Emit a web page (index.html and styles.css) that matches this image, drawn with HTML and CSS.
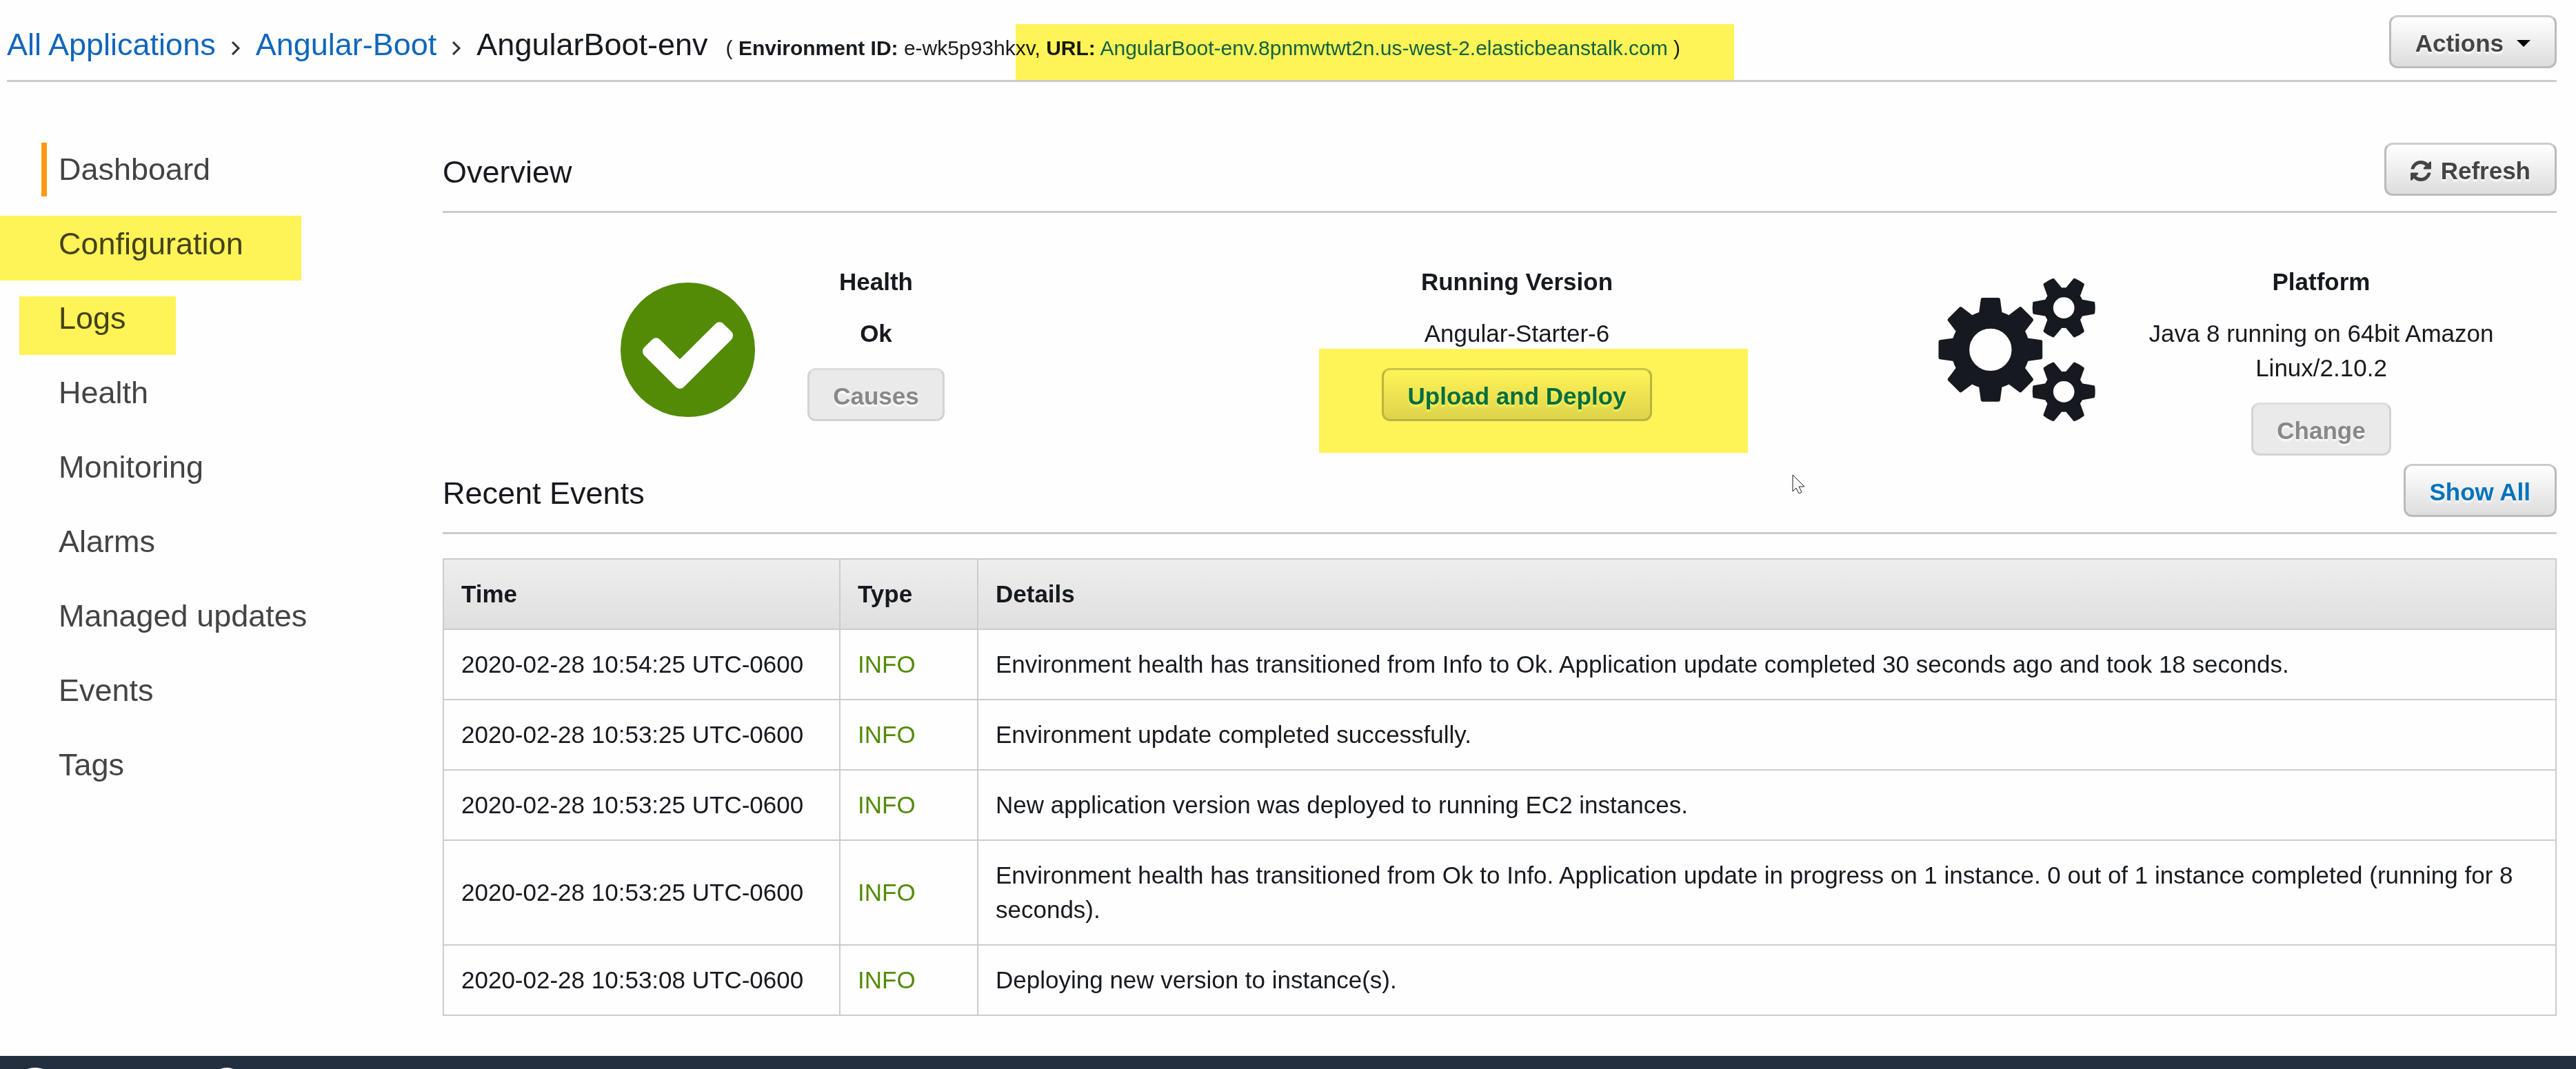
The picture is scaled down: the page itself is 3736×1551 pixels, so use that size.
FILE: index.html
```html
<!DOCTYPE html>
<html lang="en">
<head>
<meta charset="utf-8">
<title>AngularBoot-env - Dashboard</title>
<link rel="stylesheet" href="styles.css">
</head>
<body>
<div class="page">
  <header class="topbar">
    <nav class="crumbs" aria-label="Breadcrumb">
      <a class="link" href="#">All Applications</a>
      <svg class="chevron" viewBox="0 0 14 20" aria-hidden="true"><path d="M2 1l9 9-9 9"/></svg>
      <a class="link" href="#">Angular-Boot</a>
      <svg class="chevron" viewBox="0 0 14 20" aria-hidden="true"><path d="M2 1l9 9-9 9"/></svg>
      <span>AngularBoot-env</span>
      <span class="meta">( <b>Environment ID:</b> e-wk5p93hkxv, <b>URL:</b> <a class="link" href="#">AngularBoot-env.8pnmwtwt2n.us-west-2.elasticbeanstalk.com</a> )</span>
    </nav>
    <button class="btn btn-menu" type="button">Actions
      <svg class="caret" viewBox="0 0 20 10" aria-hidden="true"><path d="M0 0h20L10 10z"/></svg>
    </button>
    <span class="marker marker-url"></span>
  </header>

  <div class="layout">
    <nav class="sidebar" aria-label="Environment">
      <ul class="menu">
        <li class="menu-item"><a class="menu-link is-active" href="#">Dashboard</a></li>
        <li class="menu-item"><a class="menu-link" href="#">Configuration</a><span class="marker marker-config"></span></li>
        <li class="menu-item"><a class="menu-link" href="#">Logs</a><span class="marker marker-logs"></span></li>
        <li class="menu-item"><a class="menu-link" href="#">Health</a></li>
        <li class="menu-item"><a class="menu-link" href="#">Monitoring</a></li>
        <li class="menu-item"><a class="menu-link" href="#">Alarms</a></li>
        <li class="menu-item"><a class="menu-link" href="#">Managed updates</a></li>
        <li class="menu-item"><a class="menu-link" href="#">Events</a></li>
        <li class="menu-item"><a class="menu-link" href="#">Tags</a></li>
      </ul>
    </nav>

    <main class="content">
      <section>
        <div class="section-head">
          <h2 class="section-title">Overview</h2>
          <button class="btn btn-refresh" type="button">
            <svg class="refresh-icon" viewBox="128 128 1536 1536" aria-hidden="true"><path d="M1639 1056q0 5-1 7-64 268-268 434.500t-478 166.500q-146 0-282.500-55t-243.500-157l-129 129q-19 19-45 19t-45-19-19-45v-448q0-26 19-45t45-19h448q26 0 45 19t19 45-19 45l-137 137q71 66 161 102t187 36q134 0 250-65t186-179q11-17 53-117 8-23 30-23h192q13 0 22.500 9.500t9.500 22.500zm25-800v448q0 26-19 45t-45 19h-448q-26 0-45-19t-19-45 19-45l138-138q-148-137-349-137-134 0-250 65t-186 179q-11 17-53 117-8 23-30 23h-199q-13 0-22.500-9.500t-9.500-22.500v-7q65-268 270-434.500t480-166.500q146 0 284 55.500t245 156.500l130-129q19-19 45-19t45 19 19 45z"/></svg>
            Refresh
          </button>
        </div>
        <div class="overview">
          <div class="panel panel-health">
            <svg class="health-icon" viewBox="128 128 1536 1536" aria-hidden="true"><path d="M1412 734q0-28-18-46l-91-90q-19-19-45-19t-45 19l-408 407-226-226q-19-19-45-19t-45 19l-91 90q-18 18-18 46 0 27 18 45l362 362q19 19 45 19 27 0 46-19l543-543q18-18 18-45zm252 162q0 209-103 385.500t-279.500 279.500-385.500 103-385.500-103-279.500-279.500-103-385.500 103-385.500 279.500-279.500 385.500-103 385.500 103 279.500 279.500 103 385.500z"/></svg>
            <div class="facts">
              <h3 class="fact-title">Health</h3>
              <b>Ok</b>
              <button class="btn" type="button" disabled>Causes</button>
            </div>
          </div>
          <div class="panel">
            <div class="facts">
              <h3 class="fact-title">Running Version</h3>
              <span>Angular-Starter-6</span>
              <div class="deploy">
                <button class="btn btn-link" type="button">Upload and Deploy</button>
                <span class="marker marker-deploy"></span>
              </div>
            </div>
          </div>
          <div class="panel panel-platform">
            <svg class="gears-icon" viewBox="153 99 683 627" aria-hidden="true">
              <defs>
                <path id="big-tooth" d="M-51-155L-42-220Q-41-226-34-226H34Q41-226 42-220L51-155z"/>
                <path id="small-tooth" d="M-37-74L-27-131Q-26-134-22-135Q0-138 22-135Q26-134 27-131L37-74z"/>
                <g id="small-gear">
                  <circle class="ring" r="67" stroke-width="42"/>
                  <use href="#small-tooth" transform="rotate(30)"/>
                  <use href="#small-tooth" transform="rotate(90)"/>
                  <use href="#small-tooth" transform="rotate(150)"/>
                  <use href="#small-tooth" transform="rotate(210)"/>
                  <use href="#small-tooth" transform="rotate(270)"/>
                  <use href="#small-tooth" transform="rotate(330)"/>
                </g>
              </defs>
              <g transform="translate(380 412)">
                <circle class="ring" r="131" stroke-width="78"/>
                <use href="#big-tooth"/>
                <use href="#big-tooth" transform="rotate(45)"/>
                <use href="#big-tooth" transform="rotate(90)"/>
                <use href="#big-tooth" transform="rotate(135)"/>
                <use href="#big-tooth" transform="rotate(180)"/>
                <use href="#big-tooth" transform="rotate(225)"/>
                <use href="#big-tooth" transform="rotate(270)"/>
                <use href="#big-tooth" transform="rotate(315)"/>
              </g>
              <use href="#small-gear" transform="translate(699 230)"/>
              <use href="#small-gear" transform="translate(699 595)"/>
            </svg>
            <div class="facts facts-wide">
              <h3 class="fact-title">Platform</h3>
              <span>Java 8 running on 64bit Amazon Linux/2.10.2</span>
              <button class="btn" type="button" disabled>Change</button>
            </div>
          </div>
        </div>
      </section>

      <section>
        <div class="section-head">
          <h2 class="section-title">Recent Events</h2>
          <button class="btn btn-link" type="button">Show All</button>
        </div>
        <table class="events">
          <thead>
            <tr><th class="col-time">Time</th><th class="col-type">Type</th><th>Details</th></tr>
          </thead>
          <tbody>
            <tr><td>2020-02-28 10:54:25 UTC-0600</td><td class="info">INFO</td><td>Environment health has transitioned from Info to Ok. Application update completed 30 seconds ago and took 18 seconds.</td></tr>
            <tr><td>2020-02-28 10:53:25 UTC-0600</td><td class="info">INFO</td><td>Environment update completed successfully.</td></tr>
            <tr><td>2020-02-28 10:53:25 UTC-0600</td><td class="info">INFO</td><td>New application version was deployed to running EC2 instances.</td></tr>
            <tr><td>2020-02-28 10:53:25 UTC-0600</td><td class="info">INFO</td><td>Environment health has transitioned from Ok to Info. Application update in progress on 1 instance. 0 out of 1 instance completed (running for 8 seconds).</td></tr>
            <tr><td>2020-02-28 10:53:08 UTC-0600</td><td class="info">INFO</td><td>Deploying new version to instance(s).</td></tr>
          </tbody>
        </table>
      </section>
    </main>
  </div>

  <footer class="footer">
    <svg class="footer-icon" viewBox="0 0 60 50" aria-hidden="true"><ellipse cx="30" cy="22" rx="28" ry="22"/><path d="M12 34l-4 16 20-8z"/></svg>
    <svg class="footer-icon" viewBox="0 0 60 50" aria-hidden="true"><circle cx="30" cy="25" r="25"/></svg>
  </footer>
  <svg class="pointer" viewBox="0 0 20 28" aria-hidden="true"><path d="M1 1v24l5-5 4 8 4-2-4-8h8z"/></svg>
</div>
</body>
</html>
```
FILE: styles.css
```css
* {
  box-sizing: border-box;
}

body {
  margin: 0;
  background: #fefefe;
  color: #16191f;
  font: 35px/50px "Liberation Sans", Arial, Helvetica, sans-serif;
}

.page {
  position: relative;
  display: flex;
  flex-direction: column;
  height: 100vh;
  overflow: hidden;
}

.link {
  color: #1166bb;
  text-decoration: none;
}

/* Header */
.topbar {
  position: relative;
  display: flex;
  flex: none;
  align-items: flex-end;
  justify-content: space-between;
  margin: 0 28px 0 10px;
  padding: 22px 0 17px;
  border-bottom: 3px solid #ccc;
}

.crumbs {
  display: flex;
  align-items: baseline;
  gap: 22px;
  font-size: 45px;
  line-height: 68px;
  white-space: nowrap;
}

.chevron {
  width: 14px;
  height: 20px;
  margin-bottom: 4px;
  fill: none;
  stroke: #333;
  stroke-width: 3;
}

.meta {
  margin-left: 4px;
  font-size: 30px;
  line-height: 50px;
}

/* Buttons */
.btn {
  display: inline-flex;
  align-items: center;
  padding: 5px 35px 0;
  border: 3px solid #bbb;
  border-top-color: #ccc;
  border-radius: 12px;
  background: linear-gradient(#fff, #ddd);
  color: #444;
  font: bold 35px/66px "Liberation Sans", Arial, Helvetica, sans-serif;
  text-shadow: 0 3px 3px #fff;
  white-space: nowrap;
}

.btn:disabled {
  padding: 5px 34px 0;
  border-color: #d3d3d3;
  border-top-color: #ddd;
  background: #eaeaea;
  color: #888;
}

.btn-link {
  color: #0073bb;
}

.btn-menu {
  gap: 19px;
}

.caret {
  width: 20px;
  height: 10px;
  fill: #000;
}

.btn-refresh {
  gap: 14px;
}

.refresh-icon {
  width: 30px;
  height: 30px;
  fill: #444;
}

/* Highlighter strokes laid over the page */
.marker {
  position: absolute;
  background: #fff457;
  mix-blend-mode: multiply;
  pointer-events: none;
}

.marker-url {
  top: 35px;
  bottom: 0;
  left: 1463px;
  width: 1042px;
}

.marker-config {
  top: -2px;
  left: -60px;
  width: 437px;
  height: 94px;
}

.marker-logs {
  top: 7px;
  left: -32px;
  width: 227px;
  height: 85px;
}

.marker-deploy {
  top: -28px;
  left: -91px;
  width: 622px;
  height: 151px;
}

/* Page columns */
.layout {
  display: grid;
  flex: none;
  grid-template-columns: 642px 1fr;
  padding: 88px 28px 58px 0;
}

.menu {
  display: grid;
  gap: 30px;
  margin: 0;
  padding: 0 0 0 60px;
  list-style: none;
}

.menu-item {
  position: relative;
}

.menu-link {
  display: block;
  padding-left: 17px;
  border-left: 8px solid transparent;
  color: #444;
  font-size: 45px;
  line-height: 78px;
  text-decoration: none;
}

.is-active {
  border-left-color: #ff9914;
}

.section-head {
  display: flex;
  align-items: flex-end;
  justify-content: space-between;
  padding-bottom: 22px;
  border-bottom: 3px solid #ccc;
}

.section-title {
  margin: 0;
  font-size: 45px;
  font-weight: normal;
  line-height: 68px;
}

/* Overview */
.overview {
  display: grid;
  grid-template-columns: 986fr 1144fr 936fr;
  padding: 75px 0 12px;
}

.panel {
  display: flex;
  align-items: flex-start;
  justify-content: center;
}

.panel-health {
  gap: 76px;
}

.panel-platform {
  padding: 0 14px 0 39px;
}

.health-icon {
  width: 195px;
  height: 195px;
  margin-top: 26px;
  fill: #538a06;
}

.gears-icon {
  flex: none;
  width: 228px;
  height: 209px;
  margin-top: 19px;
  fill: #16191f;
}

.ring {
  fill: none;
  stroke: #16191f;
}

.facts {
  display: flex;
  flex-direction: column;
  align-items: center;
  gap: 25px;
  text-align: center;
}

.facts-wide {
  flex: 1;
}

.fact-title {
  margin: 0;
  font-size: 35px;
}

.deploy {
  position: relative;
  display: flex;
}

/* Events table */
.events {
  width: 100%;
  margin-top: 35px;
  border-collapse: collapse;
  table-layout: fixed;
}

.events th,
.events td {
  padding: 25px;
  border: 2px solid #ccc;
  text-align: left;
}

.events th {
  background: linear-gradient(#eee, #dfdfdf);
}

.col-time {
  width: 575px;
}

.col-type {
  width: 200px;
}

.events .info {
  color: #538a06;
}

/* Footer */
.footer {
  display: flex;
  flex: none;
  gap: 218px;
  padding: 17px 21px;
  background: #232f3e;
}

.footer-icon {
  width: 60px;
  height: 50px;
  fill: #fff;
}

.pointer {
  position: absolute;
  top: 688px;
  left: 2599px;
  width: 20px;
  height: 28px;
  fill: #fff;
  stroke: #16191f;
}
```
